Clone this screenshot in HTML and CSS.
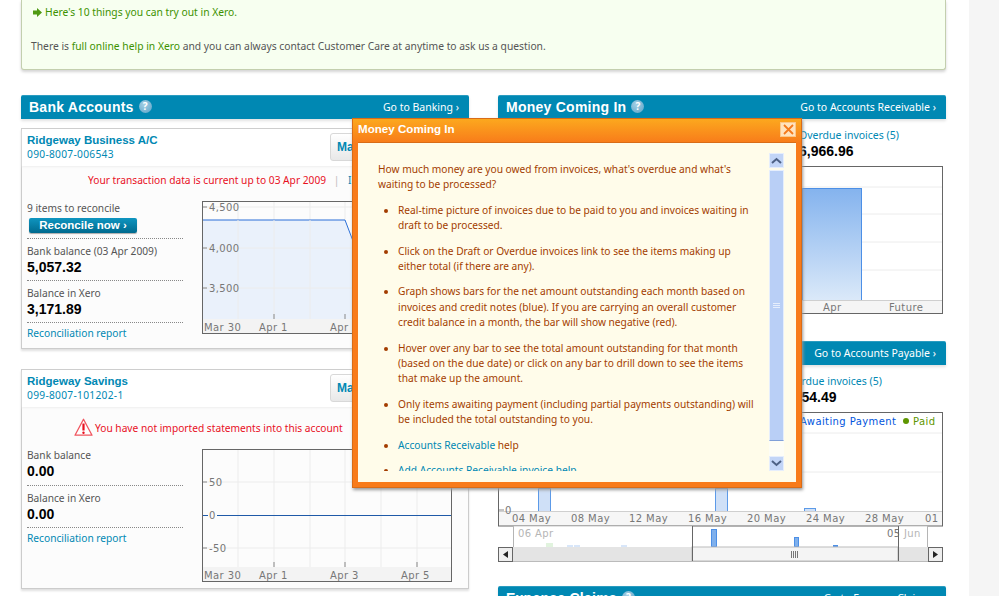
FILE: index.html
```html
<!DOCTYPE html>
<html lang="en">

<head>
    <meta charset="UTF-8">
    <title>Xero | Dashboard</title>
    <link rel="stylesheet" href="styles.css">
</head>

<body>
    <div class="layout">
        <div class="main">
            <div class="welcome">
                <p class="tryout">
                    <svg class="arrow" width="9" height="9" viewBox="0 0 9 9">
                        <path d="M0 2.5h4V0l5 4.5L4 9V6.5H0z" fill="#4f9a12" />
                    </svg>
                    <a href="#">Here's 10 things you can try out in Xero.</a>
                </p>
                <p>There is <a href="#">full online help in Xero</a> and you can always contact Customer Care at anytime to ask us a question.</p>
            </div>

            <div class="columns">
                <div class="column">
                    <div class="panel-head">
                        <h2>Bank Accounts</h2>
                        <span class="help">?</span>
                        <a class="go" href="#">Go to Banking ›</a>
                    </div>

                    <div class="card">
                        <div class="card-head">
                            <div>
                                <a class="account" href="#">Ridgeway Business A/C</a>
                                <a class="number" href="#">090-8007-006543</a>
                            </div>
                            <a class="manage" href="#">Manage Account</a>
                        </div>
                        <div class="card-body">
                            <p class="alert alert-current">Your transaction data is current up to 03 Apr 2009 <span class="sep">|</span> <a href="#">Import a Bank Statement</a></p>
                            <div class="card-cols">
                                <div class="stats">
                                    <div class="stat">
                                        <span class="label">9 items to reconcile</span>
                                        <a class="reconcile" href="#">Reconcile now ›</a>
                                    </div>
                                    <div class="stat">
                                        <span class="label">Bank balance (03 Apr 2009)</span>
                                        <span class="value">5,057.32</span>
                                    </div>
                                    <div class="stat">
                                        <span class="label">Balance in Xero</span>
                                        <span class="value">3,171.89</span>
                                    </div>
                                    <a class="report" href="#">Reconciliation report</a>
                                </div>
                                <svg class="chart" width="250" height="133" viewBox="0 0 250 133">
                                    <rect x="0" y="0" width="250" height="133" fill="#fcfcfc" />
                                    <path class="grid" d="M36 1V118M72 1V118M108 1V118M143 1V118M179 1V118M215 1V118M0 6H250M0 47H250M0 87H250" />
                                    <path d="M1 19H143L151 40L165 60L190 70L250 70V118H1z" fill="#eaf1fb" />
                                    <path d="M1 19H143L151 40L165 60L190 70L250 70" fill="none" stroke="#2a6fd8" stroke-width="1" />
                                    <path class="grid" d="M36 19V118M72 19V118M108 19V118M0 47H250M0 87H250" />
                                    <rect x="1" y="118" width="248" height="14" fill="#f3f3f3" />
                                    <path class="tick" d="M0 6H5M0 47H5M0 87H5M72 113V118M143 113V118M215 113V118" />
                                    <text class="axis" x="7" y="10">4,500</text>
                                    <text class="axis" x="7" y="51">4,000</text>
                                    <text class="axis" x="7" y="91">3,500</text>
                                    <text class="axis" x="2" y="130">Mar 30</text>
                                    <text class="axis" x="57" y="130">Apr 1</text>
                                    <text class="axis" x="128" y="130">Apr 3</text>
                                    <text class="axis" x="199" y="130">Apr 5</text>
                                    <rect class="frame" x="0.5" y="0.5" width="249" height="132" />
                                </svg>
                            </div>
                        </div>
                    </div>

                    <div class="card card-second">
                        <div class="card-head">
                            <div>
                                <a class="account" href="#">Ridgeway Savings</a>
                                <a class="number" href="#">099-8007-101202-1</a>
                            </div>
                            <a class="manage" href="#">Manage Account</a>
                        </div>
                        <div class="card-body">
                            <p class="alert alert-warning">
                                <svg class="warn" width="19" height="19" viewBox="0 0 19 19">
                                    <path d="M9.5 1.2L18 17.2H1z" fill="#fff" stroke="#f0555f" stroke-width="1.3" stroke-linejoin="round" />
                                    <path d="M9.5 5.5v7" stroke="#e8101f" stroke-width="2.2" />
                                    <circle cx="9.5" cy="14.7" r="1.2" fill="#e8101f" />
                                </svg>
                                You have not imported statements into this account
                            </p>
                            <div class="card-cols">
                                <div class="stats">
                                    <div class="stat stat-first">
                                        <span class="label">Bank balance</span>
                                        <span class="value">0.00</span>
                                    </div>
                                    <div class="stat">
                                        <span class="label">Balance in Xero</span>
                                        <span class="value">0.00</span>
                                    </div>
                                    <a class="report" href="#">Reconciliation report</a>
                                </div>
                                <svg class="chart" width="250" height="133" viewBox="0 0 250 133">
                                    <rect x="0" y="0" width="250" height="133" fill="#fcfcfc" />
                                    <path class="grid" d="M36 1V118M72 1V118M108 1V118M143 1V118M179 1V118M215 1V118M0 33H250M0 99H250" />
                                    <path d="M0 66.5H250" stroke="#1f5aa8" stroke-width="1" />
                                    <rect x="1" y="118" width="248" height="14" fill="#f3f3f3" />
                                    <path class="tick" d="M0 33H5M0 99H5M72 113V118M143 113V118M215 113V118" />
                                    <rect x="6" y="60" width="9" height="12" fill="#fcfcfc" />
                                    <text class="axis" x="7" y="37">50</text>
                                    <text class="axis" x="7" y="70">0</text>
                                    <text class="axis" x="7" y="103">-50</text>
                                    <text class="axis" x="2" y="130">Mar 30</text>
                                    <text class="axis" x="57" y="130">Apr 1</text>
                                    <text class="axis" x="128" y="130">Apr 3</text>
                                    <text class="axis" x="199" y="130">Apr 5</text>
                                    <rect class="frame" x="0.5" y="0.5" width="249" height="132" />
                                </svg>
                            </div>
                        </div>
                    </div>
                </div>

                <div class="column">
                    <div class="panel-head">
                        <h2>Money Coming In</h2>
                        <span class="help">?</span>
                        <a class="go" href="#">Go to Accounts Receivable ›</a>
                    </div>
                    <div class="summary summary-in">
                        <a class="invoices" href="#">Overdue invoices (5)</a>
                        <span class="value">6,966.96</span>
                    </div>
                    <svg class="chart-wide" width="445" height="148" viewBox="0 0 445 148">
                        <defs>
                            <linearGradient id="barFill" x1="0" y1="0" x2="0" y2="1">
                                <stop offset="0" stop-color="#84b3ee" />
                                <stop offset="1" stop-color="#dbe9f9" />
                            </linearGradient>
                        </defs>
                        <path class="grid" d="M0 21H445M0 48H445M0 76H445M0 104H445" />
                        <rect x="304.5" y="22.5" width="59" height="112" fill="url(#barFill)" stroke="#4c8fe6" />
                        <rect x="1" y="135" width="443" height="12" fill="#f5f5f5" />
                        <path d="M0 134.5H445" stroke="#cfcfcf" />
                        <text class="axis" x="325" y="145">Apr</text>
                        <text class="axis" x="391" y="145">Future</text>
                        <rect class="frame" x="0.5" y="0.5" width="444" height="147" />
                    </svg>

                    <div class="panel-head panel-head-next">
                        <h2>Money Going Out</h2>
                        <span class="help">?</span>
                        <a class="go" href="#">Go to Accounts Payable ›</a>
                    </div>
                    <div class="summary summary-out">
                        <a class="invoices" href="#">Overdue invoices (5)</a>
                        <span class="value">3,154.49</span>
                    </div>
                    <svg class="chart-wide" width="445" height="150" viewBox="0 0 445 150">
                        <path class="grid" d="M0 21H445M0 60H445" />
                        <rect x="40.5" y="76.5" width="12" height="23" fill="#cfe0f7" stroke="#5c9ae8" />
                        <rect x="217.5" y="76.5" width="12" height="23" fill="#cfe0f7" stroke="#5c9ae8" />
                        <rect x="306.5" y="96.5" width="11" height="3" fill="#cfe0f7" stroke="#5c9ae8" />
                        <rect x="1" y="100" width="443" height="14" fill="#f6f6f6" />
                        <path d="M0 99.5H445" stroke="#cfcfcf" />
                        <path class="tick" d="M0 98H6" />
                        <text class="axis" x="7" y="102">0</text>
                        <text class="axis" x="14" y="110">04 May</text>
                        <text class="axis" x="73" y="110">08 May</text>
                        <text class="axis" x="131" y="110">12 May</text>
                        <text class="axis" x="190" y="110">16 May</text>
                        <text class="axis" x="249" y="110">20 May</text>
                        <text class="axis" x="308" y="110">24 May</text>
                        <text class="axis" x="367" y="110">28 May</text>
                        <text class="axis" x="427" y="110">01</text>
                        <text class="legend" x="302" y="13">Awaiting Payment</text>
                        <circle cx="408" cy="9" r="3" fill="#5e9600" />
                        <text class="legend legend-paid" x="415" y="13">Paid</text>
                        <rect class="frame" x="0.5" y="0.5" width="444" height="113.5" />

                        <text class="axis" x="389" y="125">05</text>
                        <rect x="213.5" y="117.5" width="5" height="17" fill="#7fb0ec" stroke="#4c8fe6" />
                        <rect x="296.5" y="125.5" width="4" height="9" fill="#7fb0ec" stroke="#4c8fe6" />
                        <rect x="335.5" y="133.5" width="4" height="1" fill="#7fb0ec" stroke="#4c8fe6" />
                        <rect x="48" y="131" width="7" height="4" fill="#a9dca0" />
                        <rect x="69" y="133" width="6" height="2" fill="#8fb8ee" />
                        <rect x="76" y="133" width="6" height="2" fill="#8fb8ee" />
                        <rect x="123" y="133" width="6" height="2" fill="#8fb8ee" />
                        <rect x="15" y="114" width="179" height="21" fill="#fff" fill-opacity=".65" />
                        <rect x="400" y="114" width="30" height="21" fill="#fff" fill-opacity=".65" />
                        <text class="axis axis-faded" x="20" y="125">06 Apr</text>
                        <text class="axis axis-faded" x="406" y="125">Jun</text>
                        <path d="M15.5 114V135M400.5 114V135M429.5 114V135" stroke="#b5b5b5" />

                        <rect x="15" y="135" width="415" height="15" fill="#e4e4e4" />
                        <rect x="194" y="135" width="206" height="14" fill="#f4f4f4" stroke="#bbb" />
                        <path d="M194.5 114V149.5H400.5V114" fill="none" stroke="#666" />
                        <path d="M0 149.5H445" stroke="#bbb" />
                        <path d="M293.5 139V146M295.5 139V146M297.5 139V146M299.5 139V146" stroke="#777" />
                        <rect x="0.5" y="135.5" width="14" height="14" fill="#eee" stroke="#666" />
                        <path d="M10 139V146L5 142.5z" fill="#222" />
                        <rect x="430.5" y="135.5" width="14" height="14" fill="#eee" stroke="#666" />
                        <path d="M435 139V146L440 142.5z" fill="#222" />
                    </svg>

                    <div class="panel-head panel-head-last">
                        <h2>Expense Claims</h2>
                        <span class="help">?</span>
                        <a class="go" href="#">Go to Expense Claims ›</a>
                    </div>
                </div>
            </div>
        </div>
        <div class="gutter"></div>
    </div>

    <div class="modal">
        <div class="modal-title">
            <span>Money Coming In</span>
            <span class="modal-close">
                <svg width="11" height="11" viewBox="0 0 11 11">
                    <path d="M1 1l9 9M10 1l-9 9" stroke="#f47a1c" stroke-width="1.8" />
                </svg>
            </span>
        </div>
        <div class="modal-body">
            <div class="modal-text">
                <p>How much money are you owed from invoices, what's overdue and what's waiting to be processed?</p>
                <ul>
                    <li>Real-time picture of invoices due to be paid to you and invoices waiting in draft to be processed.</li>
                    <li>Click on the Draft or Overdue invoices link to see the items making up either total (if there are any).</li>
                    <li>Graph shows bars for the net amount outstanding each month based on invoices and credit notes (blue). If you are carrying an overall customer credit balance in a month, the bar will show negative (red).</li>
                    <li>Hover over any bar to see the total amount outstanding for that month (based on the due date) or click on any bar to drill down to see the items that make up the amount.</li>
                    <li>Only items awaiting payment (including partial payments outstanding) will be included the total outstanding to you.</li>
                    <li><a href="#">Accounts Receivable</a> help</li>
                    <li><a href="#">Add Accounts Receivable invoice help</a></li>
                </ul>
            </div>
            <div class="scrollbar">
                <span class="scroll-btn">
                    <svg width="11" height="7" viewBox="0 0 11 7"><path d="M1 6l4.5-4L10 6" fill="none" stroke="#4d6185" stroke-width="2" /></svg>
                </span>
                <span class="scroll-thumb"><i></i><i></i><i></i></span>
                <span class="scroll-track"></span>
                <span class="scroll-btn">
                    <svg width="11" height="7" viewBox="0 0 11 7"><path d="M1 1l4.5 4L10 1" fill="none" stroke="#4d6185" stroke-width="2" /></svg>
                </span>
            </div>
        </div>
    </div>
</body>

</html>
```

FILE: styles.css
```css
html,
body {
    margin: 0;
    height: 596px;
    overflow: hidden;
}

body {
    background: #fff;
    font-family: 'Noto Sans', sans-serif;
    font-size: 10.2px;
    line-height: 14px;
    color: #555;
}

a {
    color: #0088b3;
    text-decoration: none;
}

p {
    margin: 0;
}

.layout {
    display: flex;
    height: 596px;
}

.main {
    width: 925px;
    padding: 0 23px 0 21px;
}

.gutter {
    flex: 1;
    background: #f5f5f5;
}

/* welcome box */

.welcome {
    box-sizing: border-box;
    height: 70px;
    padding: 5px 9px 0;
    font-size: 10.3px;
    background: #f7fff0;
    border: 1px solid #c3cfae;
    border-top: none;
    border-radius: 0 0 3px 3px;
    box-shadow: 0 2px 3px #d4d4d4;
    margin-bottom: 25px;
}

.welcome a {
    color: #3d9200;
}

.tryout {
    display: flex;
    align-items: center;
    gap: 3px;
    margin: 0 2px 20px;
}

/* columns */

.columns {
    display: grid;
    grid-template-columns: 448px 448px;
    gap: 29px;
}

.panel-head {
    display: flex;
    align-items: center;
    gap: 5px;
    height: 24px;
    padding: 0 10px 2px 8px;
    background: #0088b3;
    border-top: 1px solid #2a9cc0;
    border-radius: 2px 2px 0 0;
    box-sizing: border-box;
    box-shadow: 0 2px 3px #e2e2e2;
}

.panel-head h2 {
    margin: 0;
    font-family: 'Liberation Sans', sans-serif;
    font-size: 14px;
    font-weight: 700;
    letter-spacing: 0.25px;
    color: #fff;
}

.panel-head .go {
    margin-left: auto;
    font-size: 10.5px;
    color: #fff;
}

.panel-head-next {
    margin-top: 27px;
}

.panel-head-last {
    margin-top: 24px;
}

.help {
    width: 13px;
    height: 13px;
    border-radius: 50%;
    background: radial-gradient(circle at 40% 35%, #a4cfe4, #5aa3c8);
    color: #fff;
    font-size: 10px;
    font-weight: 700;
    line-height: 13px;
    text-align: center;
}

/* account cards */

.card {
    margin-top: 9px;
    background: #fcfcfc;
    border: 1px solid #ccc;
    box-shadow: 0 2px 2px #e0e0e0;
}

.card-second {
    margin-top: 20px;
}

.card-head {
    display: flex;
    justify-content: space-between;
    height: 37px;
    box-sizing: border-box;
    padding: 4px 8px 0 5px;
    background: #fff;
    box-shadow: 0 1px 2px #eee;
}

.account {
    display: block;
    font-family: 'Liberation Sans', sans-serif;
    font-size: 11.5px;
    font-weight: 700;
}

.number {
    display: block;
    letter-spacing: 0.3px;
}

.invoices {
    display: block;
    font-size: 10.5px;
}

.manage {
    box-sizing: border-box;
    width: 130px;
    height: 28px;
    padding: 0 6px;
    line-height: 26px;
    font-family: 'Liberation Sans', sans-serif;
    font-size: 12px;
    font-weight: 700;
    border: 1px solid #d8d8d8;
    border-radius: 3px;
    background: linear-gradient(#fff, #e8e8e8);
}

.card-body {
    padding: 6px 16px 8px 5px;
}

.alert {
    color: #e8101f;
    white-space: nowrap;
}

.alert-current {
    padding-left: 61px;
    margin: 0 0 13px;
    height: 16px;
    line-height: 16px;
}

.sep {
    margin: 0 6px 0 5px;
    color: #bbb;
}

.alert-warning {
    display: flex;
    align-items: center;
    gap: 2px;
    height: 19px;
    padding-left: 47px;
    margin: 4px 0 11px;
}

.card-second .card-body {
    padding-top: 7px;
    padding-bottom: 6px;
}

.card-second .chart {
    margin-top: 1px;
}

.card-cols {
    display: grid;
    grid-template-columns: 156px 250px;
    gap: 19px;
    align-items: start;
}

.chart {
    display: block;
}

.stat {
    display: block;
    padding: 5px 0 4px;
    border-bottom: 1px dotted #888;
}

.stat:first-child {
    padding-top: 0;
    padding-bottom: 5px;
}

.label {
    display: block;
}

.value {
    display: block;
    height: 18px;
    font-family: 'Liberation Sans', sans-serif;
    font-size: 14px;
    font-weight: 700;
    line-height: 18px;
    color: #000;
}

.reconcile {
    display: block;
    width: 108px;
    height: 15px;
    margin: 3px 0 0 2px;
    text-align: center;
    font-family: 'Liberation Sans', sans-serif;
    font-size: 11.5px;
    font-weight: 700;
    line-height: 15px;
    color: #fff;
    border-radius: 2px;
    background: linear-gradient(#0f95c0, #006a8e);
    box-shadow: 0 1px 1px #aaa;
}

.report {
    display: block;
    padding-top: 3px;
}

/* charts */

.grid {
    fill: none;
    stroke: #ececec;
}

.tick {
    fill: none;
    stroke: #888;
}

.frame {
    fill: none;
    stroke: #666;
}

.axis {
    font-family: 'DejaVu Sans', sans-serif;
    font-size: 10px;
    letter-spacing: 0.4px;
    fill: #777;
}

.axis-faded {
    fill: #b5b5b5;
}

.legend {
    font-family: 'DejaVu Sans', sans-serif;
    font-size: 10px;
    letter-spacing: 0.4px;
    fill: #0055dd;
}

.legend-paid {
    fill: #5e9600;
}

.summary {
    padding: 9px 0 6px;
}

.summary-in {
    padding-left: 301px;
}

.summary-out {
    padding-left: 284px;
}

.chart-wide {
    display: block;
}

/* help popup */

.modal {
    position: absolute;
    left: 352px;
    top: 118px;
    box-sizing: border-box;
    width: 450px;
    height: 370px;
    display: flex;
    flex-direction: column;
    padding: 0 5px 5px;
    background: linear-gradient(#fca81e, #f87b1a 24px);
    border: 1px solid #d96c17;
    box-shadow: 1px 2px 3px #999;
}

.modal-title {
    display: flex;
    justify-content: space-between;
    align-items: center;
    height: 23px;
    flex: none;
    box-sizing: border-box;
    padding-bottom: 3px;
    font-family: 'Liberation Sans', sans-serif;
    font-size: 11.6px;
    font-weight: 700;
    color: #fff;
}

.modal-close {
    display: flex;
    justify-content: center;
    align-items: center;
    width: 14px;
    height: 13px;
    background: #ffe3bd;
    border: 1px solid #fbc78a;
}

.modal-body {
    flex: 1;
    display: flex;
    align-items: flex-start;
    background: #fffcea;
    border-top: 1px solid #d96c17;
}

.modal-text {
    box-sizing: border-box;
    width: 397px;
    height: 318px;
    margin-top: 10px;
    padding: 9px 0 0 20px;
    overflow: hidden;
    line-height: 15.4px;
    color: #a33c00;
}

.modal-text ul {
    margin: 10px 0 0;
    padding: 0 0 0 20px;
}

.modal-text li {
    margin-bottom: 10px;
}

.scrollbar {
    display: flex;
    flex-direction: column;
    width: 15px;
    height: 318px;
    margin: 10px 0 0 14px;
}

.scroll-btn {
    flex: none;
    display: flex;
    justify-content: center;
    align-items: center;
    height: 15px;
    background: #c2d5f7;
    border: 1px solid #e6eefc;
    box-sizing: border-box;
}

.scroll-thumb {
    flex: none;
    display: flex;
    flex-direction: column;
    justify-content: center;
    gap: 1px;
    box-sizing: border-box;
    height: 271px;
    margin-top: 2px;
    background: #b9cff6;
    border: 1px solid #e6eefc;
    border-bottom-color: #7f9fd8;
}

.scroll-thumb i {
    display: block;
    height: 1px;
    margin: 0 3px;
    background: #e6eefc;
}

.scroll-track {
    flex: 1;
    background: #fdfdf6;
}
```
